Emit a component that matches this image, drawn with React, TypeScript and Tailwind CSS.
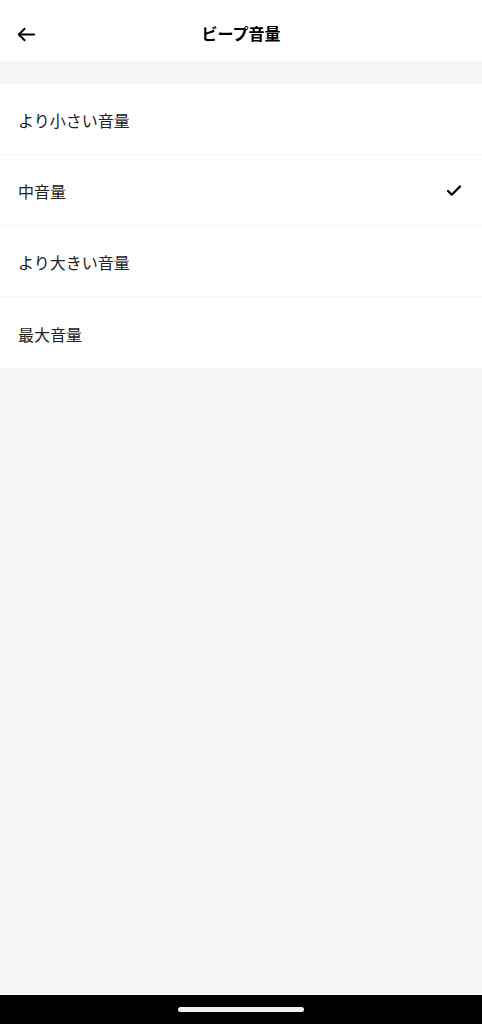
import { Check } from "lucide-react"

const options = ["より小さい音量", "中音量", "より大きい音量", "最大音量"]
const selected = 1

export default function App() {
  return (
    <div
      className="flex h-[1024px] w-full flex-col bg-[#f6f6f6]"
      style={{ fontFamily: '"Noto Sans CJK JP", "Noto Sans", sans-serif' }}
    >
      {/* header */}
      <div className="relative flex h-[61px] items-center justify-center bg-white pt-[5px]">
        <button className="absolute left-[15px] top-[23px] text-black">
          <svg width="23" height="23" viewBox="0 0 24 24" fill="none" stroke="currentColor" strokeWidth="2" strokeLinecap="round" strokeLinejoin="round">
            <path d="M20 12H4" />
            <path d="M10 6l-6 6 6 6" />
          </svg>
        </button>
        <h1 className="text-[16px] font-bold text-black">ビープ音量</h1>
      </div>

      {/* options */}
      <div className="mt-[23px] bg-white">
        {options.map((label, i) => (
          <div
            key={label}
            className={`flex h-[71px] items-center justify-between pl-[18px] pr-[19px] pt-[2px] ${
              i < options.length - 1 ? "border-b border-[#f8f8f8]" : ""
            }`}
          >
            <span className="text-[16px] text-[#222]">{label}</span>
            {i === selected && <Check className="h-[18px] w-[18px] text-black" strokeWidth={3} />}
          </div>
        ))}
      </div>

      <div className="flex-1" />

      {/* system nav bar */}
      <div className="flex h-[29px] items-start justify-center bg-black pt-[12px]">
        <div className="h-[5px] w-[126px] rounded-full bg-[#f0f0f0]" />
      </div>
    </div>
  )
}
